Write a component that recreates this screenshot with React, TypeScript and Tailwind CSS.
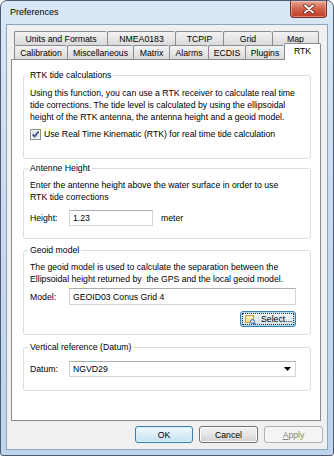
import React from "react";

function CloseButton() {
  return (
    <div className="mt-0 mr-[6px] w-[37px] h-[17px] rounded-b-[4px] border border-t-0 border-[#7a2a20] bg-linear-to-b from-[#e8a593] via-[#d0604a] to-[#c23a22] flex items-center justify-center shadow-[inset_0_0_0_1px_rgba(255,255,255,0.35)]">
      <svg width="12" height="10" viewBox="0 0 12 10">
        <path d="M2 1.5 L10 8.5 M10 1.5 L2 8.5" stroke="#5a1a10" strokeWidth="3.4" strokeLinecap="round" />
        <path d="M2 1.5 L10 8.5 M10 1.5 L2 8.5" stroke="#ffffff" strokeWidth="2" strokeLinecap="round" />
      </svg>
    </div>
  );
}

function Tab({ w, label, last }: { w: string; label: string; last?: boolean }) {
  return (
    <div
      className={`${w} h-full shrink-0 flex items-center justify-center border-t border-l border-[#898c95] ${
        last ? "border-r" : ""
      } bg-linear-to-b from-[#f3f3f3] to-[#dadada] rounded-t-[2px] whitespace-nowrap`}
    >
      {label}
    </div>
  );
}

function Group({
  title,
  className,
  children,
}: {
  title: string;
  className: string;
  children: React.ReactNode;
}) {
  return (
    <fieldset className={`border border-[#d5dfe5] rounded-[3px] px-[4px] ${className}`}>
      <legend className="px-[2px] leading-[12px]">{title}</legend>
      {children}
    </fieldset>
  );
}

function SelectIcon() {
  return (
    <svg width="11" height="11" viewBox="0 0 11 11">
      <rect x="0.5" y="1.5" width="8" height="7" fill="#f6dc8c" stroke="#c9a445" strokeWidth="1" />
      <rect x="1.5" y="2.5" width="6" height="2" fill="#fff3c8" />
      <circle cx="7.5" cy="7.5" r="2" fill="#cfe6fb" stroke="#3d6fb0" strokeWidth="1" />
      <path d="M9 9 L10.5 10.5" stroke="#3d6fb0" strokeWidth="1.4" />
    </svg>
  );
}

export default function App() {
  return (
    <div className="w-[334px] h-[456px] flex flex-col border border-[#4e5b6e] rounded-t-[7px] rounded-b-[3px] bg-linear-to-b from-[#d9e7f6] via-[#c7daf0] to-[#bed3ec] font-['Liberation_Sans',Arial,sans-serif] text-[8.7px] leading-[12px] text-black overflow-hidden">
      <div className="h-[23px] shrink-0 flex items-start justify-between">
        <span className="mt-[6px] ml-[9px] text-[9px] leading-[11px]">Preferences</span>
        <CloseButton />
      </div>
      <div className="flex-1 mx-[5px] mb-[5px] border border-[#8ea3be] bg-[#f0f0f0] flex flex-col">
        <div className="pt-[6px] pl-[7px]">
          <div className="h-[14px] flex">
            <Tab w="w-[93px]" label="Units and Formats" />
            <Tab w="w-[68px]" label="NMEA0183" />
            <Tab w="w-[48px]" label="TCPIP" />
            <Tab w="w-[49px]" label="Grid" />
            <Tab w="w-[47px]" label="Map" last />
          </div>
          <div className="h-[14px] flex items-end">
            <Tab w="w-[53px]" label="Calibration" />
            <Tab w="w-[66px]" label="Miscellaneous" />
            <Tab w="w-[36px]" label="Matrix" />
            <Tab w="w-[39px]" label="Alarms" />
            <Tab w="w-[37px]" label="ECDIS" />
            <Tab w="w-[39px]" label="Plugins" />
            <div className="relative z-10 w-[37px] h-[17px] -mb-[1px] shrink-0 border border-b-0 border-[#898c95] bg-white rounded-t-[2px] flex justify-center pt-[1px]">
              RTK
            </div>
          </div>
        </div>
        <div className="ml-[4px] w-[310px] h-[362px] shrink-0 border border-[#898c95] bg-white flex flex-col pl-[11px] pr-[9px]">
          <Group title="RTK tide calculations" className="mt-[9px] pb-[18px]">
            <div className="pl-[2px] pt-[6px] whitespace-nowrap">
              Using this function, you can use a RTK receiver to calculate real time
              <br />
              tide corrections. The tide level is calculated by using the ellipsoidal
              <br />
              height of the RTK antenna, the antenna height and a geoid model.
              <div className="mt-[5px] h-[12px] flex items-center gap-[3px]">
                <svg width="11" height="11" viewBox="0 0 11 11">
                  <rect x="0.5" y="0.5" width="10" height="10" fill="#f4f4f4" stroke="#8e8f8f" />
                  <rect x="2" y="2" width="7" height="7" fill="#dfe3ea" />
                  <path d="M2.6 5.4 L4.6 7.6 L8.6 2.6" fill="none" stroke="#3b4f85" strokeWidth="1.6" />
                </svg>
                <span>Use Real Time Kinematic (RTK) for real time tide calculation</span>
              </div>
            </div>
          </Group>

          <Group title="Antenne Height" className="mt-[3px] pb-[12px]">
            <div className="pl-[2px] pt-[5px] whitespace-nowrap">
              Enter the antenne height above the water surface in order to use
              <br />
              RTK tide corrections
              <div className="mt-[7px] flex items-center">
                <span className="w-[39px]">Height:</span>
                <div className="w-[84px] h-[16px] border border-[#d0d4db] border-t-[#abadb3] bg-white pl-[3px] flex items-center">
                  1.23
                </div>
                <span className="ml-[8px]">meter</span>
              </div>
            </div>
          </Group>

          <Group title="Geoid model" className="mt-[5px] pb-[7px]">
            <div className="pl-[2px] pr-[10px] pt-[5px] whitespace-nowrap">
              The geoid model is used to calculate the separation between the
              <br />
              Ellipsoidal height returned by&nbsp; the GPS and the local geoid model.
              <div className="mt-[3px] flex items-center">
                <span className="w-[39px]">Model:</span>
                <div className="w-[227px] h-[17px] border border-[#d0d4db] border-t-[#abadb3] bg-white pl-[3px] flex items-center">
                  GEOID03 Conus Grid 4
                </div>
              </div>
              <div className="mt-[6px] flex justify-end">
                <div className="w-[56px] h-[16px] rounded-[3px] border border-[#3c7fb1] bg-linear-to-b from-[#f4f8fb] via-[#e3edf4] to-[#cddde9] p-[1px] shadow-[inset_0_0_0_1px_#a9dcf6]">
                  <div className="w-full h-full border border-dotted border-[#333] flex items-center pl-[2px] gap-[5px]">
                    <SelectIcon />
                    <span>Select...</span>
                  </div>
                </div>
              </div>
            </div>
          </Group>

          <Group title="Vertical reference (Datum)" className="mt-[6px] pb-[13px]">
            <div className="pl-[2px] pt-[8px] whitespace-nowrap">
              <div className="flex items-center">
                <span className="w-[39px]">Datum:</span>
                <div className="w-[227px] h-[16px] border border-[#d0d4db] border-t-[#abadb3] bg-white pl-[3px] pr-[4px] flex items-center justify-between">
                  <span>NGVD29</span>
                  <svg width="7" height="4" viewBox="0 0 7 4">
                    <path d="M0 0 L7 0 L3.5 4 Z" fill="#000" />
                  </svg>
                </div>
              </div>
            </div>
          </Group>
        </div>
        <div className="mt-[5px] pr-[4px] flex justify-end gap-[6px]">
          <div className="w-[58px] h-[17px] rounded-[3px] border border-[#3c7fb1] bg-linear-to-b from-[#eef7fd] via-[#dcedf8] to-[#c3e2f5] shadow-[inset_0_0_0_1px_#d6f0fd] flex items-center justify-center">
            OK
          </div>
          <div className="w-[59px] h-[17px] rounded-[3px] border border-[#707070] bg-linear-to-b from-[#f2f2f2] via-[#e6e6e6] to-[#d0d0d0] shadow-[inset_0_0_0_1px_#fcfcfc] flex items-center justify-center">
            Cancel
          </div>
          <div className="w-[59px] h-[17px] rounded-[3px] border border-[#adb2b5] bg-[#f4f4f4] text-[#838383] flex items-center justify-center">
            <span>
              <span className="underline">A</span>pply
            </span>
          </div>
        </div>
      </div>
    </div>
  );
}
